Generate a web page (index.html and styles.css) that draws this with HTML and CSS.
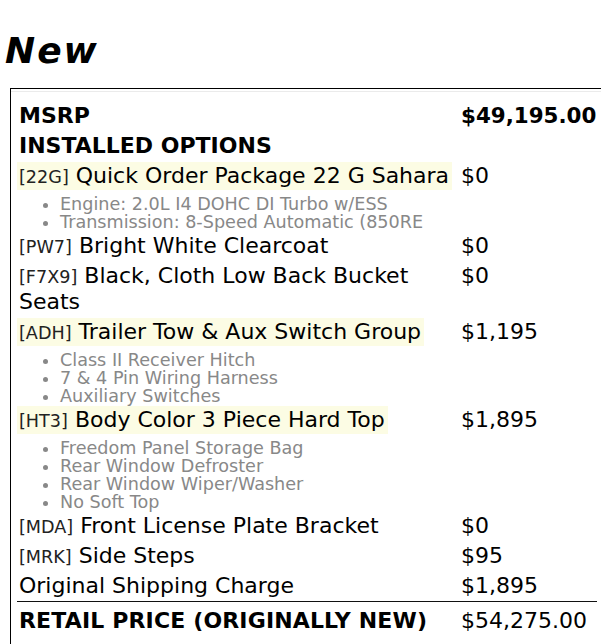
FILE: index.html
```html
<!DOCTYPE html>
<html>
<head>
<meta charset="utf-8">
<link rel="stylesheet" href="styles.css">
</head>
<body>
<div class="page">
  <h1 class="title">New</h1>
  <div class="sticker">
    <div class="sticker-inner">
      <table class="price-table">
        <colgroup><col class="col-name"><col class="col-price"></colgroup>
        <tr class="row-head">
          <td class="name"><span class="label">MSRP</span></td>
          <td class="price price-msrp">$49,195.00</td>
        </tr>
        <tr class="row-head">
          <td class="name"><span class="label">INSTALLED OPTIONS</span></td>
          <td class="price"></td>
        </tr>
        <tr>
          <td class="name">
            <span class="label hl"><span class="code">[22G]</span> Quick Order Package 22 G Sahara</span>
            <ul class="features">
              <li>Engine: 2.0L I4 DOHC DI Turbo w/ESS</li>
              <li>Transmission: 8-Speed Automatic (850RE</li>
            </ul>
          </td>
          <td class="price">$0</td>
        </tr>
        <tr>
          <td class="name"><span class="label"><span class="code">[PW7]</span> Bright White Clearcoat</span></td>
          <td class="price">$0</td>
        </tr>
        <tr>
          <td class="name"><span class="label"><span class="code">[F7X9]</span> Black, Cloth Low Back Bucket Seats</span></td>
          <td class="price">$0</td>
        </tr>
        <tr>
          <td class="name">
            <span class="label hl"><span class="code">[ADH]</span> Trailer Tow &amp; Aux Switch Group</span>
            <ul class="features">
              <li>Class II Receiver Hitch</li>
              <li>7 &amp; 4 Pin Wiring Harness</li>
              <li>Auxiliary Switches</li>
            </ul>
          </td>
          <td class="price">$1,195</td>
        </tr>
        <tr>
          <td class="name">
            <span class="label hl"><span class="code">[HT3]</span> Body Color 3 Piece Hard Top</span>
            <ul class="features">
              <li>Freedom Panel Storage Bag</li>
              <li>Rear Window Defroster</li>
              <li>Rear Window Wiper/Washer</li>
              <li>No Soft Top</li>
            </ul>
          </td>
          <td class="price">$1,895</td>
        </tr>
        <tr>
          <td class="name"><span class="label"><span class="code">[MDA]</span> Front License Plate Bracket</span></td>
          <td class="price">$0</td>
        </tr>
        <tr>
          <td class="name"><span class="label"><span class="code">[MRK]</span> Side Steps</span></td>
          <td class="price">$95</td>
        </tr>
        <tr>
          <td class="name"><span class="label">Original Shipping Charge</span></td>
          <td class="price">$1,895</td>
        </tr>
        <tr class="row-total">
          <td class="name"><span class="label">RETAIL PRICE (ORIGINALLY NEW)</span></td>
          <td class="price">$54,275.00</td>
        </tr>
      </table>
    </div>
  </div>
</div>
</body>
</html>
```

FILE: styles.css
```css
html, body {
  margin: 0;
  padding: 0;
  background: #fff;
  overflow: hidden;
}

body {
  font-family: "DejaVu Sans", sans-serif;
  color: #000;
}

.page {
  padding-left: 10px;
}

.title {
  font-family: "DejaVu Sans", sans-serif;
  font-size: 36px;
  font-weight: bold;
  font-style: italic;
  letter-spacing: 2px;
  line-height: 41px;
  margin: 30px 0 17px -5px;
}

.sticker {
  border: 1px solid #000;
  padding-top: 2px;
  width: 594px;
}

.sticker-inner {
  border-top: 1px solid #ebebeb;
  padding: 9px 8px 8px 6px;
}

.price-table {
  border-collapse: collapse;
  width: 580px;
  table-layout: fixed;
  font-size: 22px;
  line-height: 26px;
}

.col-price {
  width: 136px;
}

.price-table td {
  padding: 2px 0;
  vertical-align: top;
}

.label {
  display: inline-block;
  vertical-align: top;
  padding: 0 3px 0 2px;
}

.hl {
  background: #fcfce4;
  margin: -1px 0;
  padding-top: 1px;
  padding-bottom: 1px;
}

.row-head td {
  font-weight: bold;
}

.price-msrp {
  font-size: 21.4px;
}

.code {
  font-size: 17.6px;
  line-height: 1;
  color: #222;
}

.features {
  list-style: disc;
  margin: 6px 0 -2px 0;
  padding-left: 43px;
  font-size: 17.6px;
  line-height: 18px;
  color: #888;
}

.row-total td {
  border-top: 1px solid #111;
  padding-top: 6px;
}

.row-total .name {
  font-weight: bold;
  letter-spacing: 0.15px;
}
```
